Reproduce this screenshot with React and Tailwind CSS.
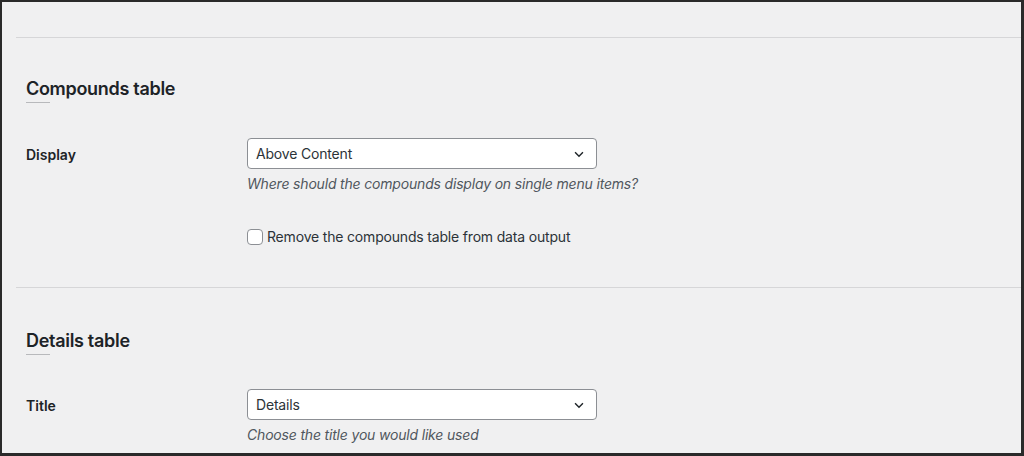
import React from 'react';

const font = { fontFamily: 'Inter, "Liberation Sans", Arial, sans-serif' };

const Chevron = () => (
  <svg width="14" height="14" viewBox="0 0 16 16" fill="none">
    <path d="M3.5 6l4.5 4.5L12.5 6" stroke="#1d2327" strokeWidth="1.6" />
  </svg>
);

const Select = ({ value }) => (
  <div className="flex items-center justify-between w-[350px] h-[31px] bg-white border border-[#8c8f94] rounded-[4px] pl-[8px] pr-[10px] text-[14px] tracking-[-0.18px] text-[#2c3338]">
    <span>{value}</span>
    <Chevron />
  </div>
);

const Heading = ({ children }) => (
  <div className="pl-[10px]">
    <h2 className="text-[18px] font-semibold text-[#1d2327] leading-[24px] tracking-[-0.3px]">{children}</h2>
    <div className="mt-[1px] w-[24px] h-px bg-[#b8b9bc]"></div>
  </div>
);

const Row = ({ label, children }) => (
  <div className="flex pl-[10px]">
    <div className="w-[221px] pt-[6px] text-[14px] font-semibold text-[#1d2327]">{label}</div>
    <div className="flex flex-col">{children}</div>
  </div>
);

export default function App() {
  return (
    <div
      className="w-[1024px] h-[456px] overflow-hidden bg-[#f0f0f1] border-t-2 border-l-2 border-r-[3px] border-b-[3px] border-[#2a2a2a]"
      style={font}
    >
      <div className="ml-[14px] h-[36px] border-b border-[#d6d6d8]"></div>

      <div className="ml-[14px] border-b border-[#d6d6d8] pt-[39px] pb-[40px]">
        <Heading>Compounds table</Heading>
        <div className="mt-[35px]">
          <Row label="Display">
            <Select value="Above Content" />
            <p className="mt-[4px] text-[14px] tracking-[-0.18px] italic text-[#50575e]">Where should the compounds display on single menu items?</p>
            <label className="mt-[32px] flex items-center gap-[4px] text-[14px] tracking-[-0.18px] text-[#2c3338]">
              <span className="w-[16px] h-[16px] bg-white border border-[#8c8f94] rounded-[4px]"></span>
              Remove the compounds table from data output
            </label>
          </Row>
        </div>
      </div>

      <div className="ml-[14px] pt-[41px]">
        <Heading>Details table</Heading>
        <div className="mt-[34px]">
          <Row label="Title">
            <Select value="Details" />
            <p className="mt-[4px] text-[14px] tracking-[-0.18px] italic text-[#50575e]">Choose the title you would like used</p>
          </Row>
        </div>
      </div>
    </div>
  );
}
